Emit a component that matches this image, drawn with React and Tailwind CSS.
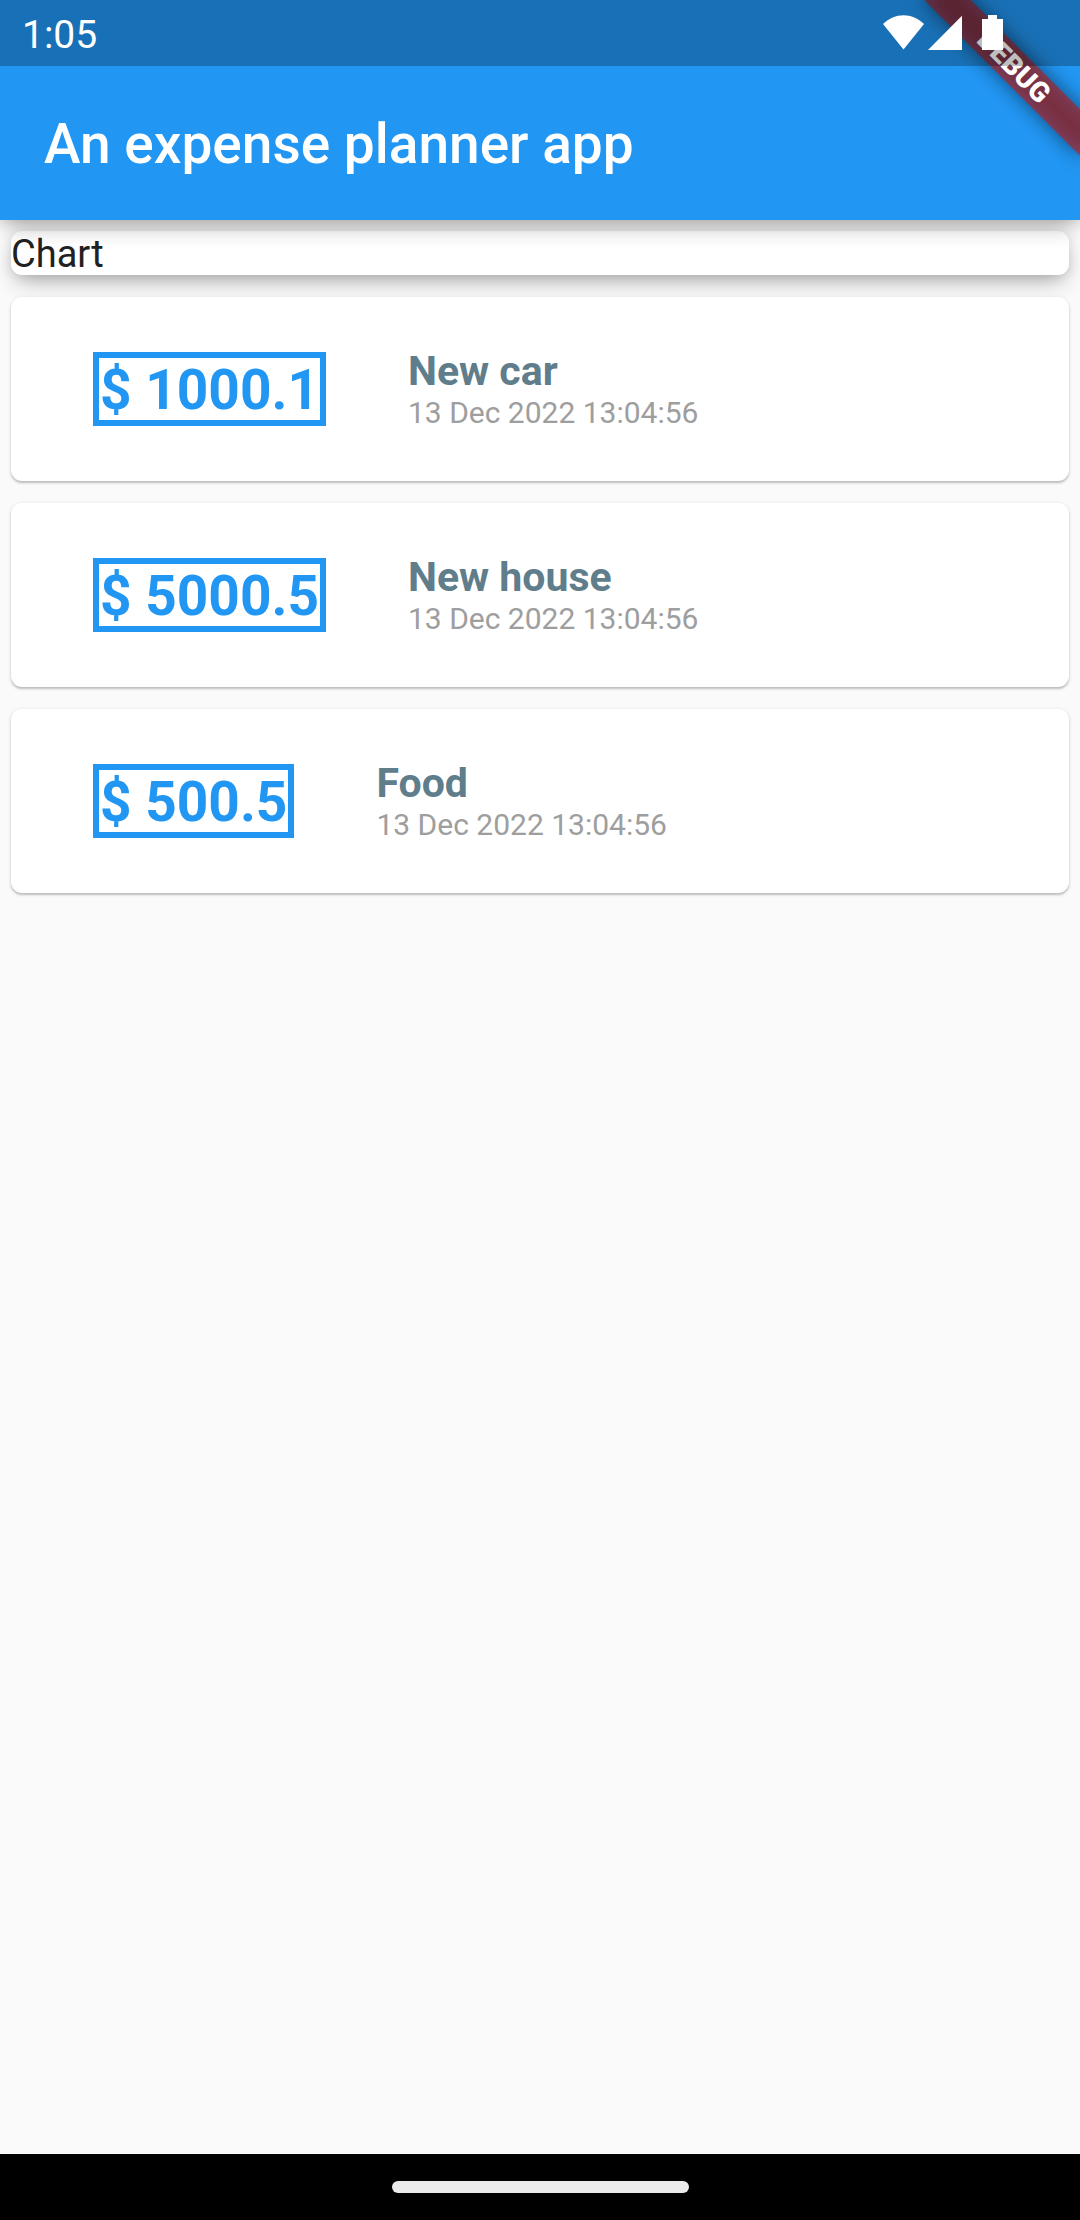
const transactions = [
  { title: "New car", amount: "1000.1", date: "13 Dec 2022 13:04:56" },
  { title: "New house", amount: "5000.5", date: "13 Dec 2022 13:04:56" },
  { title: "Food", amount: "500.5", date: "13 Dec 2022 13:04:56" },
];

function DebugBanner() {
  return (
    <div className="pointer-events-none absolute top-0 right-0 size-[220px] overflow-hidden">
      <div className="absolute top-[50px] -right-11 h-[33px] w-[220px] rotate-45">
        <div className="absolute inset-0 bg-black/50 blur-[10px]" />
        <div className="absolute inset-0 flex items-center justify-center bg-[#b71c1ca0] text-[28px] leading-none font-black text-white">
          DEBUG
        </div>
      </div>
    </div>
  );
}

function StatusBar() {
  return (
    <div className="relative flex h-[66px] items-center justify-between bg-black/25 pr-[76px] pl-[22px] text-white">
      <span className="pt-1 text-[39px] leading-[62px]">1:05</span>
      <svg width="122" height="36" viewBox="0 0 122 36" fill="currentColor" aria-label="Wi-Fi, signal and battery">
        <path d="M1 9C7 3.2 14 .2 21.5 .2S36 3.2 42 9L21.5 34.5Z" />
        <path d="M80 .8V35H46Z" />
        <path d="M106 0h9v4h6v31h-21V4h6z" />
      </svg>
    </div>
  );
}

function TransactionCard({ title, amount, date }) {
  return (
    <li className="flex items-center gap-[82px] rounded-[11px] bg-white px-[82px] py-[55px] shadow-[0_2px_2px_rgba(0,0,0,0.18),0_1px_4px_rgba(0,0,0,0.12)]">
      <div className="border-[6px] border-[#2196f3] px-px pt-[2px] text-[55px] leading-[60px] font-bold whitespace-nowrap text-[#2196f3]">
        $ {amount}
      </div>
      <div className="-my-2">
        <h2 className="text-[41px] leading-[48px] font-bold text-[#607d8b]">{title}</h2>
        <p className="text-[30px] leading-[36px] text-[#9e9e9e]">{date}</p>
      </div>
    </li>
  );
}

export default function App() {
  return (
    <div className="flex min-h-screen flex-col bg-[#fafafa] font-[Roboto,sans-serif]">
      <header className="relative z-10 bg-[#2196f3] shadow-[0_10px_22px_-5px_rgba(0,0,0,0.32),0_1px_12px_rgba(0,0,0,0.1)]">
        <DebugBanner />
        <StatusBar />
        <h1 className="px-11 pt-[46px] pb-11 text-[55px] leading-[64px] font-medium text-white">An expense planner app</h1>
      </header>
      <main className="flex flex-1 flex-col gap-[22px] p-[11px]">
        <section className="rounded-[11px] bg-white pt-[2px] text-[38px] leading-[42px] text-[#212121] shadow-[0_10px_22px_-5px_rgba(0,0,0,0.32),0_1px_12px_rgba(0,0,0,0.1)]">
          Chart
        </section>
        <ul className="flex flex-col gap-[22px]">
          {transactions.map((item) => (
            <TransactionCard key={item.title} {...item} />
          ))}
        </ul>
      </main>
      <footer className="flex h-[66px] items-center justify-center bg-black">
        <div className="h-3 w-[297px] rounded-full bg-[#ebebeb]" />
      </footer>
    </div>
  );
}
